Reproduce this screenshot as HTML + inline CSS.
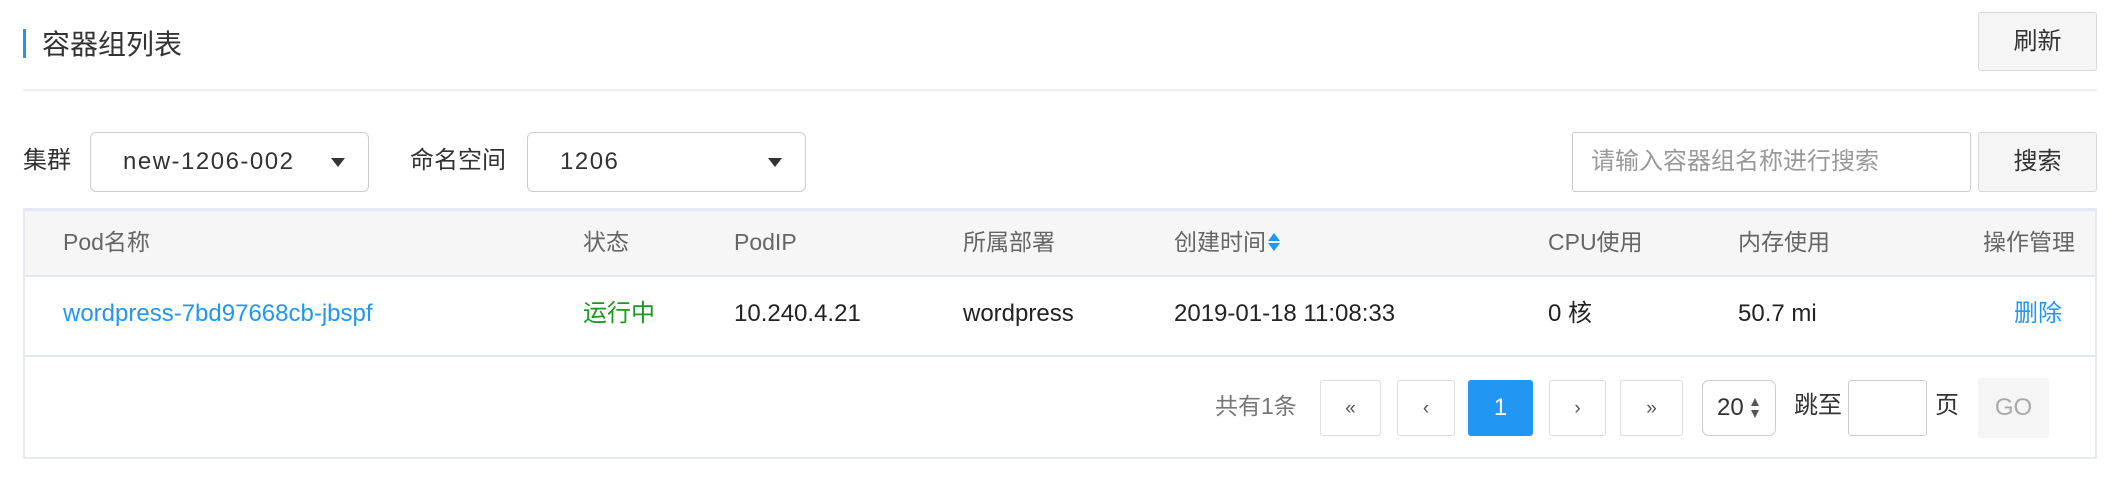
<!DOCTYPE html>
<html><head><meta charset="utf-8"><style>
*{box-sizing:border-box;margin:0;padding:0}
body{width:2116px;height:504px;background:#fff;position:relative;font-family:"Liberation Sans","Noto Sans CJK SC",sans-serif;color:#333;overflow:hidden}
.a{position:absolute}
.t{position:absolute;height:30px;line-height:30px;white-space:nowrap}
.btn{position:absolute;border:1px solid #d9d9d9;border-radius:3px;background:#f5f5f5;display:flex;align-items:center;justify-content:center;font-size:24px;color:#333;line-height:1}
.sel{position:absolute;border:1px solid #ccc;border-radius:6px;background:#fff;font-size:24px;display:flex;align-items:center;padding-left:32px;letter-spacing:1.5px;line-height:1}
.tri{position:absolute;width:0;height:0;border-left:7px solid transparent;border-right:7px solid transparent;border-top:9px solid #333;top:25px}
.th{position:absolute;top:227px;height:30px;line-height:30px;font-size:23px;color:#666;white-space:nowrap}
.td{position:absolute;top:299px;height:30px;line-height:30px;font-size:24px;color:#222;white-space:nowrap}
.pb{position:absolute;top:380px;height:56px;border:1px solid #ddd;border-radius:3px;background:#fff;display:flex;align-items:center;justify-content:center;font-size:19px;color:#555;line-height:1}
</style></head><body>
<div class="a" style="left:23px;top:29px;width:3px;height:29px;background:#2196f3"></div>
<div class="t" style="left:42px;top:28px;font-size:28px;height:34px;line-height:34px;color:#333">容器组列表</div>
<div class="btn" style="left:1978px;top:12px;width:119px;height:59px">刷新</div>
<div class="a" style="left:23px;top:89px;width:2074px;height:2px;background:#eee"></div>

<div class="t" style="left:23px;top:146px;font-size:24px">集群</div>
<div class="sel" style="left:90px;top:132px;width:279px;height:60px">new-1206-002<div class="tri" style="left:240px"></div></div>
<div class="t" style="left:410px;top:146px;font-size:24px">命名空间</div>
<div class="sel" style="left:527px;top:132px;width:279px;height:60px">1206<div class="tri" style="left:240px"></div></div>
<div class="a" style="left:1572px;top:132px;width:399px;height:60px;border:1px solid #ccc;border-radius:3px;font-size:24px;color:#999;padding-left:18px;display:flex;align-items:center;line-height:1">请输入容器组名称进行搜索</div>
<div class="btn" style="left:1978px;top:132px;width:119px;height:60px">搜索</div>

<div class="a" style="left:23px;top:208px;width:2074px;height:251px;border:2px solid #e6e9ef;border-top-width:3px"></div>
<div class="a" style="left:25px;top:211px;width:2070px;height:64px;background:#f6f6f6"></div>
<div class="a" style="left:25px;top:275px;width:2070px;height:2px;background:#e6e9ef"></div>
<div class="a" style="left:25px;top:355px;width:2070px;height:2px;background:#e6e9ef"></div>
<div class="th" style="left:63px">Pod名称</div>
<div class="th" style="left:583px">状态</div>
<div class="th" style="left:734px">PodIP</div>
<div class="th" style="left:963px">所属部署</div>
<div class="th" style="left:1174px">创建时间</div>
<svg class="a" style="left:1267px;top:232px" width="14" height="20" viewBox="0 0 14 20"><path d="M7 1L13 9H1Z M7 19L13 11H1Z" fill="#2196f3"/></svg>
<div class="th" style="left:1548px">CPU使用</div>
<div class="th" style="left:1738px">内存使用</div>
<div class="th" style="left:1983px">操作管理</div>
<div class="td" style="left:63px;color:#2196f3">wordpress-7bd97668cb-jbspf</div>
<div class="td" style="left:583px;color:#1a9a1a">运行中</div>
<div class="td" style="left:734px">10.240.4.21</div>
<div class="td" style="left:963px">wordpress</div>
<div class="td" style="left:1174px">2019-01-18 11:08:33</div>
<div class="td" style="left:1548px">0 核</div>
<div class="td" style="left:1738px">50.7 mi</div>
<div class="td" style="left:2014px;color:#2196f3">删除</div>

<div class="t" style="left:1215px;top:391px;font-size:23px;color:#777">共有1条</div>
<div class="pb" style="left:1320px;width:61px">«</div>
<div class="pb" style="left:1397px;width:58px">‹</div>
<div class="pb" style="left:1468px;width:65px;background:#2196f3;border-color:#2196f3;color:#fff;font-size:24px">1</div>
<div class="pb" style="left:1549px;width:57px">›</div>
<div class="pb" style="left:1620px;width:63px">»</div>
<div class="pb" style="left:1702px;width:74px;border-color:#ccc;border-radius:7px;font-size:24px;color:#333;justify-content:flex-start;padding-left:14px">20<svg style="margin-left:6px" width="10" height="22" viewBox="0 0 10 22"><path d="M5 1L9 9H1Z M5 21L9 13H1Z" fill="#555"/></svg></div>
<div class="t" style="left:1794px;top:391px;font-size:24px">跳至</div>
<div class="pb" style="left:1848px;width:79px;border-color:#ccc"></div>
<div class="t" style="left:1935px;top:391px;font-size:24px">页</div>
<div class="a" style="left:1978px;top:378px;width:71px;height:60px;background:#f5f5f5;border-radius:3px;color:#aaa;font-size:24px;display:flex;align-items:center;justify-content:center">GO</div>
</body></html>
